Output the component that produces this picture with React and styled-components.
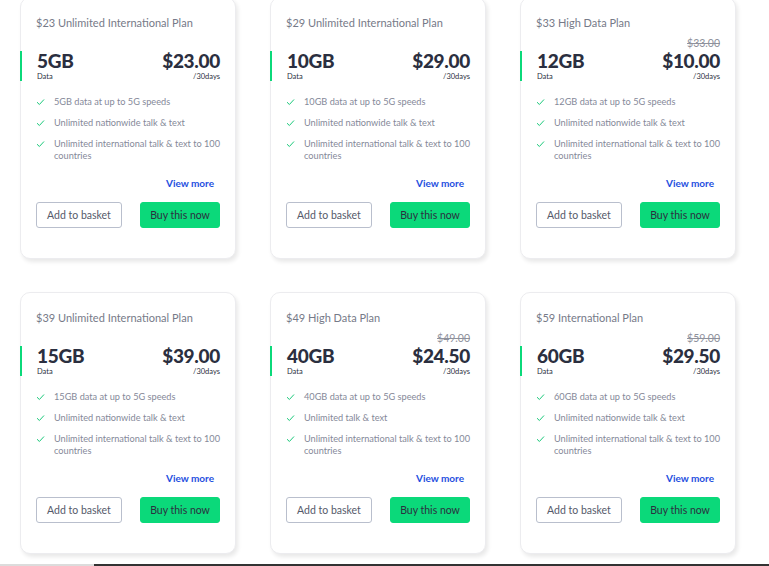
import React from 'react';
import styled, { createGlobalStyle } from 'styled-components';

const GlobalStyle = createGlobalStyle`
  html, body {
    margin: 0;
    padding: 0;
    background: #ffffff;
    font-family: Lato, "Liberation Sans", sans-serif;
    overflow: hidden;
  }
`;

const Page = styled.div`
  position: relative;
  width: 769px;
  height: 566px;
  overflow: hidden;
  background: #ffffff;
  display: flex;
  flex-direction: column;
`;

const Grid = styled.div`
  display: grid;
  grid-template-columns: repeat(3, 216px);
  column-gap: 34px;
  row-gap: 33px;
  margin-top: -3px;
  padding-left: 20px;
`;

const Card = styled.div`
  box-sizing: border-box;
  height: 262px;
  background: #ffffff;
  border: 1px solid #ececef;
  border-radius: 10px;
  box-shadow: 2px 3px 4px rgba(0, 0, 0, 0.09);
  padding: 17px 15px 0 0;
  display: flex;
  flex-direction: column;
`;

const Title = styled.div`
  padding-left: 15px;
  font-size: 11px;
  line-height: 16px;
  color: #767a88;
`;

const OldPrice = styled.div`
  height: 12px;
  margin-top: 6px;
  text-align: right;
  font-size: 10.5px;
  line-height: 12px;
  color: #8e919c;
  text-decoration: line-through;
`;

const Headline = styled.div`
  margin-top: 2px;
  display: flex;
  justify-content: space-between;
  border-left: 2px solid #0bd97a;
  margin-left: -1px;
  padding-left: 15px;
  height: 30px;
`;

const Stat = styled.div`
  display: flex;
  flex-direction: column;
  align-items: ${p => (p.$right ? 'flex-end' : 'flex-start')};
`;

const Big = styled.div`
  font-size: 19px;
  line-height: 20px;
  font-weight: 900;
  color: #2b2f40;
  letter-spacing: -0.3px;
`;

const Small = styled.div`
  margin-top: 1px;
  font-size: 7.5px;
  line-height: 9px;
  color: #2b2f40;
`;

const Features = styled.ul`
  list-style: none;
  margin: 15px 0 0;
  padding: 0 0 0 15px;
  display: flex;
  flex-direction: column;
  gap: 9px;
`;

const Feature = styled.li`
  display: flex;
  align-items: flex-start;
  gap: 9px;
  font-size: 9.2px;
  line-height: 12px;
  color: #858999;

  svg {
    flex: none;
    margin-top: 2px;
  }
`;

const ViewMore = styled.a`
  align-self: flex-end;
  margin-top: 14px;
  margin-right: 6px;
  font-size: 10px;
  line-height: 14px;
  font-weight: 700;
  color: #1f4fe0;
  text-decoration: none;
`;

const Actions = styled.div`
  margin-top: 12px;
  padding-left: 15px;
  display: flex;
  justify-content: space-between;
`;

const Button = styled.button`
  box-sizing: border-box;
  height: 26px;
  width: ${p => (p.$primary ? '80px' : '86px')};
  border-radius: 3px;
  border: 1px solid ${p => (p.$primary ? '#0bd97a' : '#b9bfcd')};
  background: ${p => (p.$primary ? '#0bd97a' : '#ffffff')};
  color: ${p => (p.$primary ? '#2b2f40' : '#555a6a')};
  font-family: inherit;
  font-size: 10.5px;
  padding: 0;
`;

const BottomBar = styled.div`
  margin-top: auto;
  height: 2px;
  display: flex;
`;

const BarPart = styled.div`
  width: ${p => p.$w || 'auto'};
  flex: ${p => (p.$w ? 'none' : 1)};
  background: ${p => p.$color};
`;

const Check = () => (
  <svg width="9" height="8" viewBox="0 0 9 8" fill="none">
    <path d="M1 4.2 L3.4 6.5 L8 1.5" stroke="#19c97a" strokeWidth="1" />
  </svg>
);

const plans = [
  { title: '$23 Unlimited International Plan', data: '5GB', price: '$23.00', talk: 'Unlimited nationwide talk & text' },
  { title: '$29 Unlimited International Plan', data: '10GB', price: '$29.00', talk: 'Unlimited nationwide talk & text' },
  { title: '$33 High Data Plan', data: '12GB', price: '$10.00', old: '$33.00', talk: 'Unlimited nationwide talk & text' },
  { title: '$39 Unlimited International Plan', data: '15GB', price: '$39.00', talk: 'Unlimited nationwide talk & text' },
  { title: '$49 High Data Plan', data: '40GB', price: '$24.50', old: '$49.00', talk: 'Unlimited talk & text' },
  { title: '$59 International Plan', data: '60GB', price: '$29.50', old: '$59.00', talk: 'Unlimited nationwide talk & text' },
];

const PlanCard = ({ plan }) => (
  <Card>
    <Title>{plan.title}</Title>
    <OldPrice>{plan.old}</OldPrice>
    <Headline>
      <Stat>
        <Big>{plan.data}</Big>
        <Small>Data</Small>
      </Stat>
      <Stat $right>
        <Big>{plan.price}</Big>
        <Small>/30days</Small>
      </Stat>
    </Headline>
    <Features>
      <Feature><Check />{plan.data} data at up to 5G speeds</Feature>
      <Feature><Check />{plan.talk}</Feature>
      <Feature><Check />Unlimited international talk &amp; text to 100 countries</Feature>
    </Features>
    <ViewMore href="#">View more</ViewMore>
    <Actions>
      <Button>Add to basket</Button>
      <Button $primary>Buy this now</Button>
    </Actions>
  </Card>
);

export default function App() {
  return (
    <Page>
      <GlobalStyle />
      <Grid>
        {plans.map(p => (
          <PlanCard key={p.title} plan={p} />
        ))}
      </Grid>
      <BottomBar>
        <BarPart $w="94px" $color="#dcdcdc" />
        <BarPart $color="#333333" />
      </BottomBar>
    </Page>
  );
}
